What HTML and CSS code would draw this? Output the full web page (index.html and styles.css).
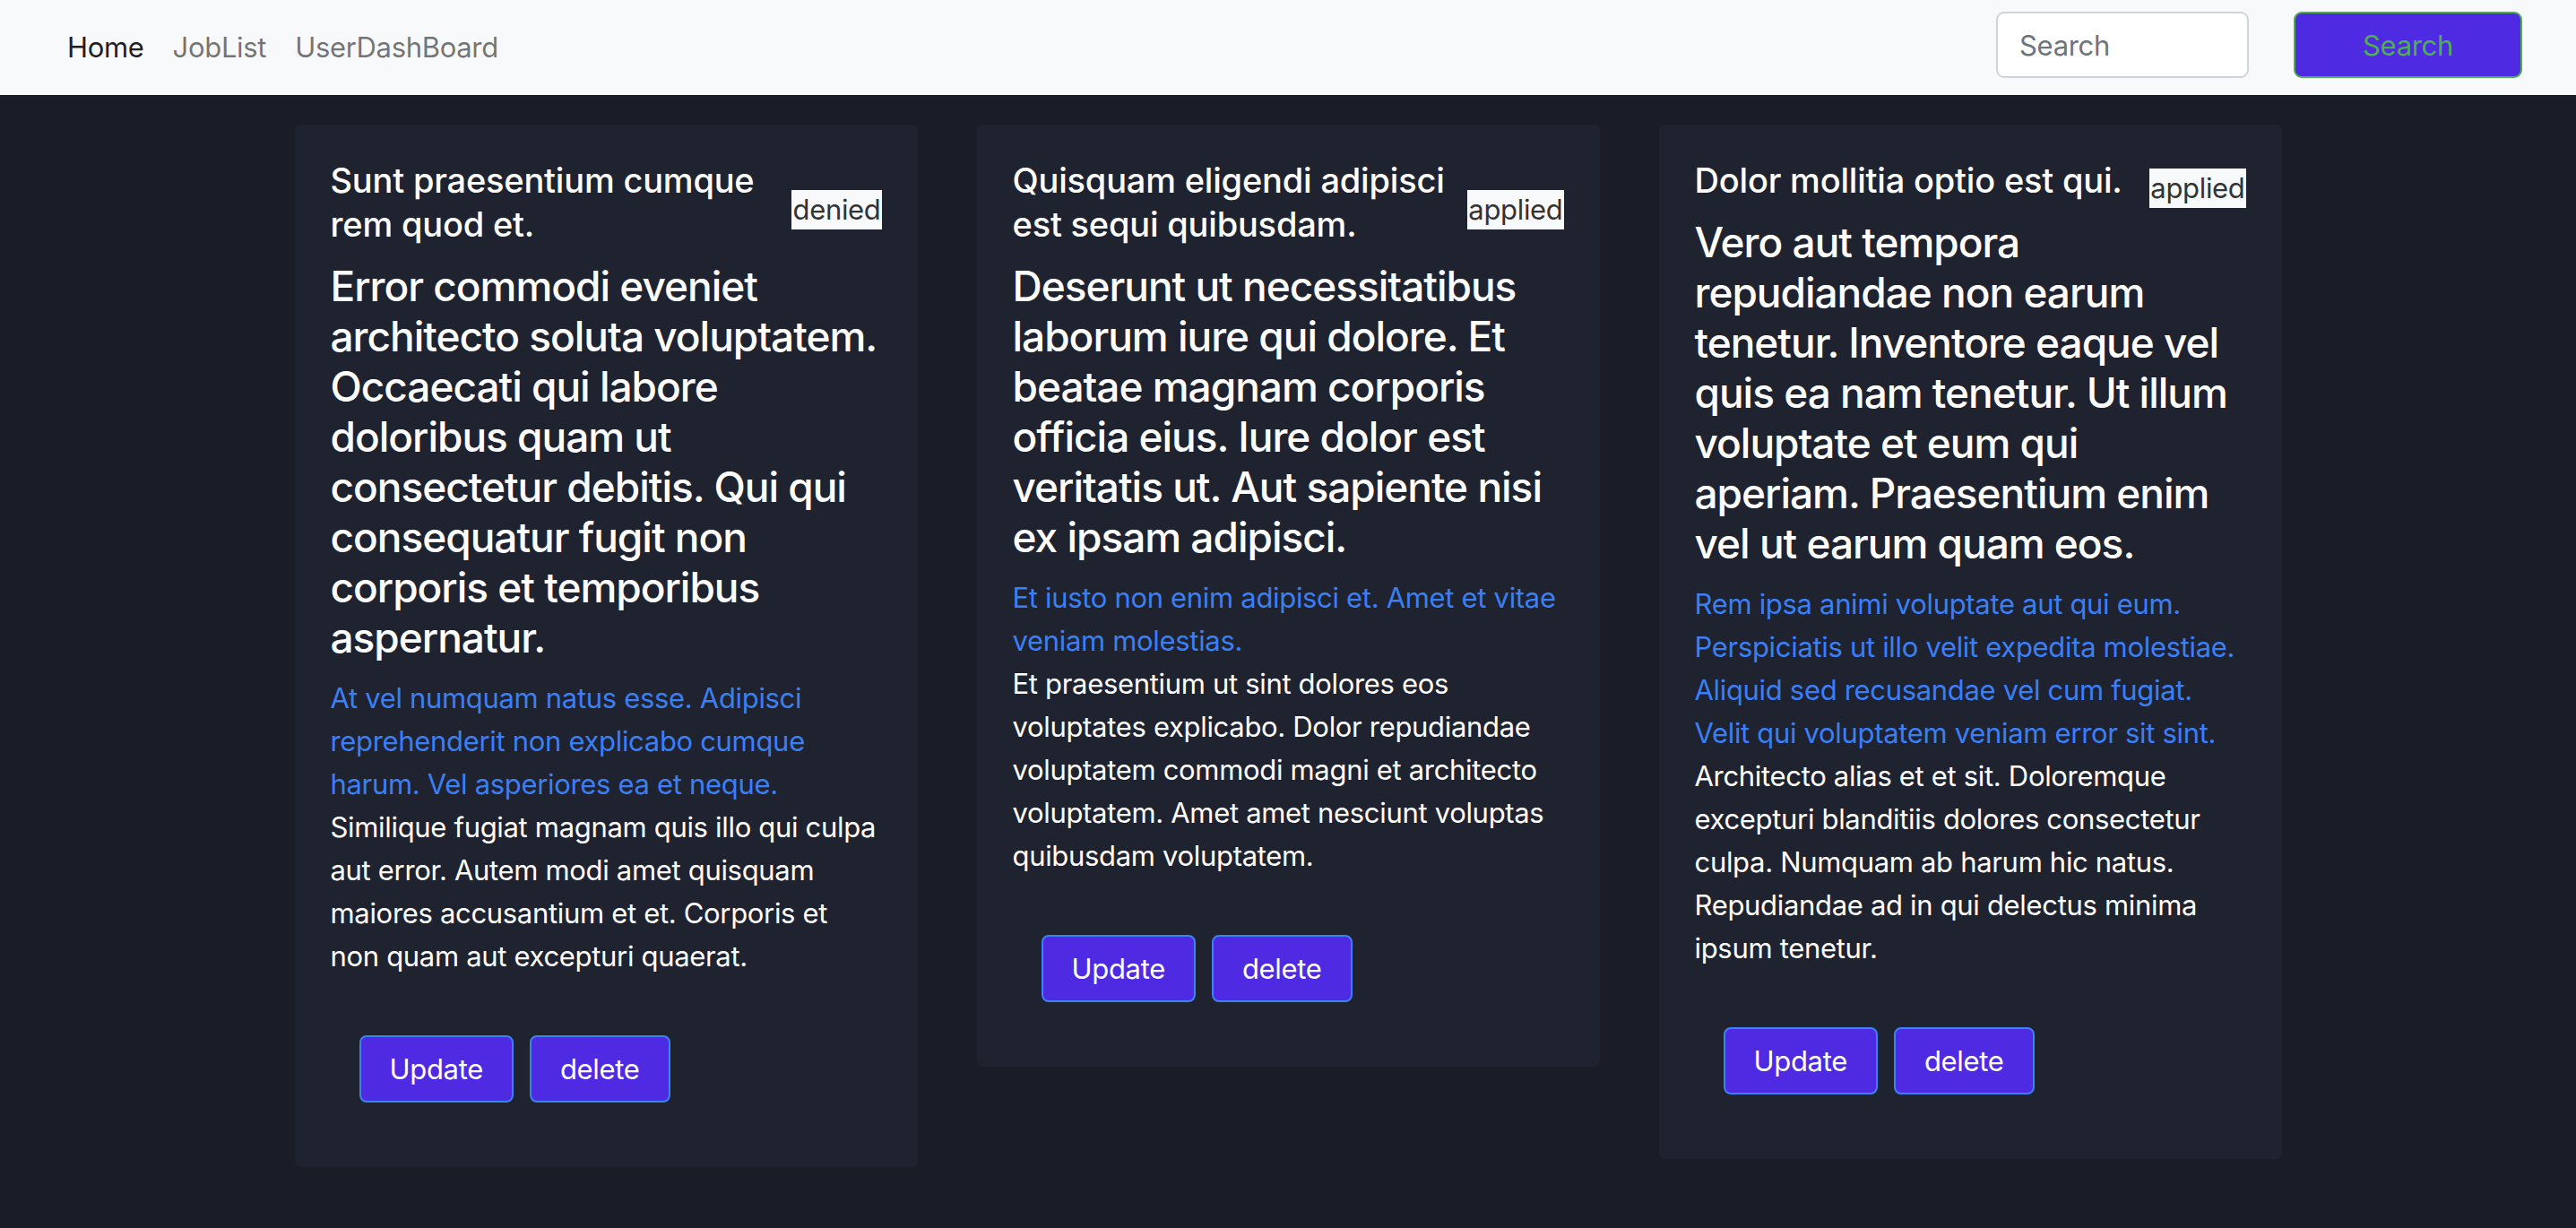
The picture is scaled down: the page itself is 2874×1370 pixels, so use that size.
FILE: index.html
```html
<!DOCTYPE html>
<html lang="en">
<head>
<meta charset="utf-8">
<title>Jobs</title>
<link rel="stylesheet" href="styles.css">
</head>
<body>
<nav class="navbar">
  <div class="nav-links">
    <a class="nav-link active" href="#">Home</a>
    <a class="nav-link" href="#">JobList</a>
    <a class="nav-link" href="#">UserDashBoard</a>
  </div>
  <form class="search-form">
    <input class="search-input" type="search" placeholder="Search">
    <button class="search-btn" type="button">Search</button>
  </form>
</nav>
<main class="cards">
  <article class="card">
    <div class="card-head">
      <h5 class="card-title">Sunt praesentium cumque rem quod et.</h5>
      <span class="badge">denied</span>
    </div>
    <h4 class="card-desc">Error commodi eveniet architecto soluta voluptatem. Occaecati qui labore doloribus quam ut consectetur debitis. Qui qui consequatur fugit non corporis et temporibus aspernatur.</h4>
    <p class="card-blue">At vel numquam natus esse. Adipisci reprehenderit non explicabo cumque harum. Vel asperiores ea et neque.</p>
    <p class="card-text">Similique fugiat magnam quis illo qui culpa aut error. Autem modi amet quisquam maiores accusantium et et. Corporis et non quam aut excepturi quaerat.</p>
    <div class="actions">
      <button class="btn" type="button">Update</button>
      <button class="btn" type="button">delete</button>
    </div>
  </article>
  <article class="card">
    <div class="card-head">
      <h5 class="card-title">Quisquam eligendi adipisci est sequi quibusdam.</h5>
      <span class="badge">applied</span>
    </div>
    <h4 class="card-desc">Deserunt ut necessitatibus laborum iure qui dolore. Et beatae magnam corporis officia eius. Iure dolor est veritatis ut. Aut sapiente nisi ex ipsam adipisci.</h4>
    <p class="card-blue">Et iusto non enim adipisci et. Amet et vitae veniam molestias.</p>
    <p class="card-text">Et praesentium ut sint dolores eos voluptates explicabo. Dolor repudiandae voluptatem commodi magni et architecto voluptatem. Amet amet nesciunt voluptas quibusdam voluptatem.</p>
    <div class="actions">
      <button class="btn" type="button">Update</button>
      <button class="btn" type="button">delete</button>
    </div>
  </article>
  <article class="card">
    <div class="card-head">
      <h5 class="card-title">Dolor mollitia optio est qui.</h5>
      <span class="badge">applied</span>
    </div>
    <h4 class="card-desc">Vero aut tempora repudiandae non earum tenetur. Inventore eaque vel quis ea nam tenetur. Ut illum voluptate et eum qui aperiam. Praesentium enim vel ut earum quam eos.</h4>
    <p class="card-blue">Rem ipsa animi voluptate aut qui eum. Perspiciatis ut illo velit expedita molestiae. Aliquid sed recusandae vel cum fugiat. Velit qui voluptatem veniam error sit sint.</p>
    <p class="card-text">Architecto alias et et sit. Doloremque excepturi blanditiis dolores consectetur culpa. Numquam ab harum hic natus. Repudiandae ad in qui delectus minima ipsum tenetur.</p>
    <div class="actions">
      <button class="btn" type="button">Update</button>
      <button class="btn" type="button">delete</button>
    </div>
  </article>
</main>
</body>
</html>
```
FILE: styles.css
```css
* { box-sizing: border-box; }
html, body { margin: 0; padding: 0; }
body {
  background: #1a1d27;
  min-height: 1370px;
  font-family: Inter, "Noto Sans", "Liberation Sans", sans-serif;
  letter-spacing: -0.02em;
  color: #fff;
}
.navbar {
  height: 106px;
  background: #f8f9fa;
  display: flex;
  align-items: center;
  justify-content: space-between;
  padding: 0 60px 0 75px;
}
.nav-links { display: flex; gap: 32px; }
.nav-link {
  font-size: 31px;
  line-height: 48px;
  color: rgba(0, 0, 0, 0.55);
  text-decoration: none;
}
.nav-link.active { color: rgba(0, 0, 0, 0.9); }
.search-form { display: flex; gap: 50px; margin-top: -6px; }
.search-input {
  width: 282px;
  height: 74px;
  border: 2px solid #ced4da;
  border-radius: 9px;
  padding: 0 24px;
  font-family: inherit;
  letter-spacing: inherit;
  font-size: 31px;
  color: #212529;
  background: #fff;
}
.search-input::placeholder { color: #6c757d; }
.search-btn {
  width: 255px;
  height: 74px;
  border: 2px solid #4caf50;
  border-radius: 9px;
  background: #4f2ae3;
  color: #4caf50;
  font-family: inherit;
  letter-spacing: inherit;
  font-size: 31px;
}
.cards {
  display: flex;
  justify-content: center;
  align-items: flex-start;
  gap: 66px;
  margin-top: 33px;
}
.card {
  width: 695px;
  background: #1f222f;
  border-radius: 6px;
  padding: 38px 40px 40px;
}
.card-head {
  display: flex;
  align-items: center;
  justify-content: space-between;
}
.card-title {
  margin: 0 0 16px;
  font-size: 38px;
  line-height: 49px;
  font-weight: 500;
  letter-spacing: -0.005em;
}
.badge {
  background: #f8f9fa;
  color: #333;
  font-size: 31px;
  line-height: 44px;
  padding: 0 1px;
  flex-shrink: 0;
}
.card-desc {
  margin: 0 0 16px;
  font-size: 46px;
  line-height: 56px;
  font-weight: 500;
  letter-spacing: -0.022em;
}
.card-blue {
  margin: 0;
  font-size: 31px;
  line-height: 48px;
  color: #3b7ff5;
}
.card-text {
  margin: 0 0 32px;
  font-size: 31px;
  line-height: 48px;
}
.actions { display: flex; gap: 18px; padding: 32px; }
.btn {
  height: 75px;
  padding: 0 32px;
  background: #4f2ae3;
  border: 2px solid #3b82f6;
  border-radius: 8px;
  color: #fff;
  font-family: inherit;
  letter-spacing: inherit;
  font-size: 31px;
}
```
